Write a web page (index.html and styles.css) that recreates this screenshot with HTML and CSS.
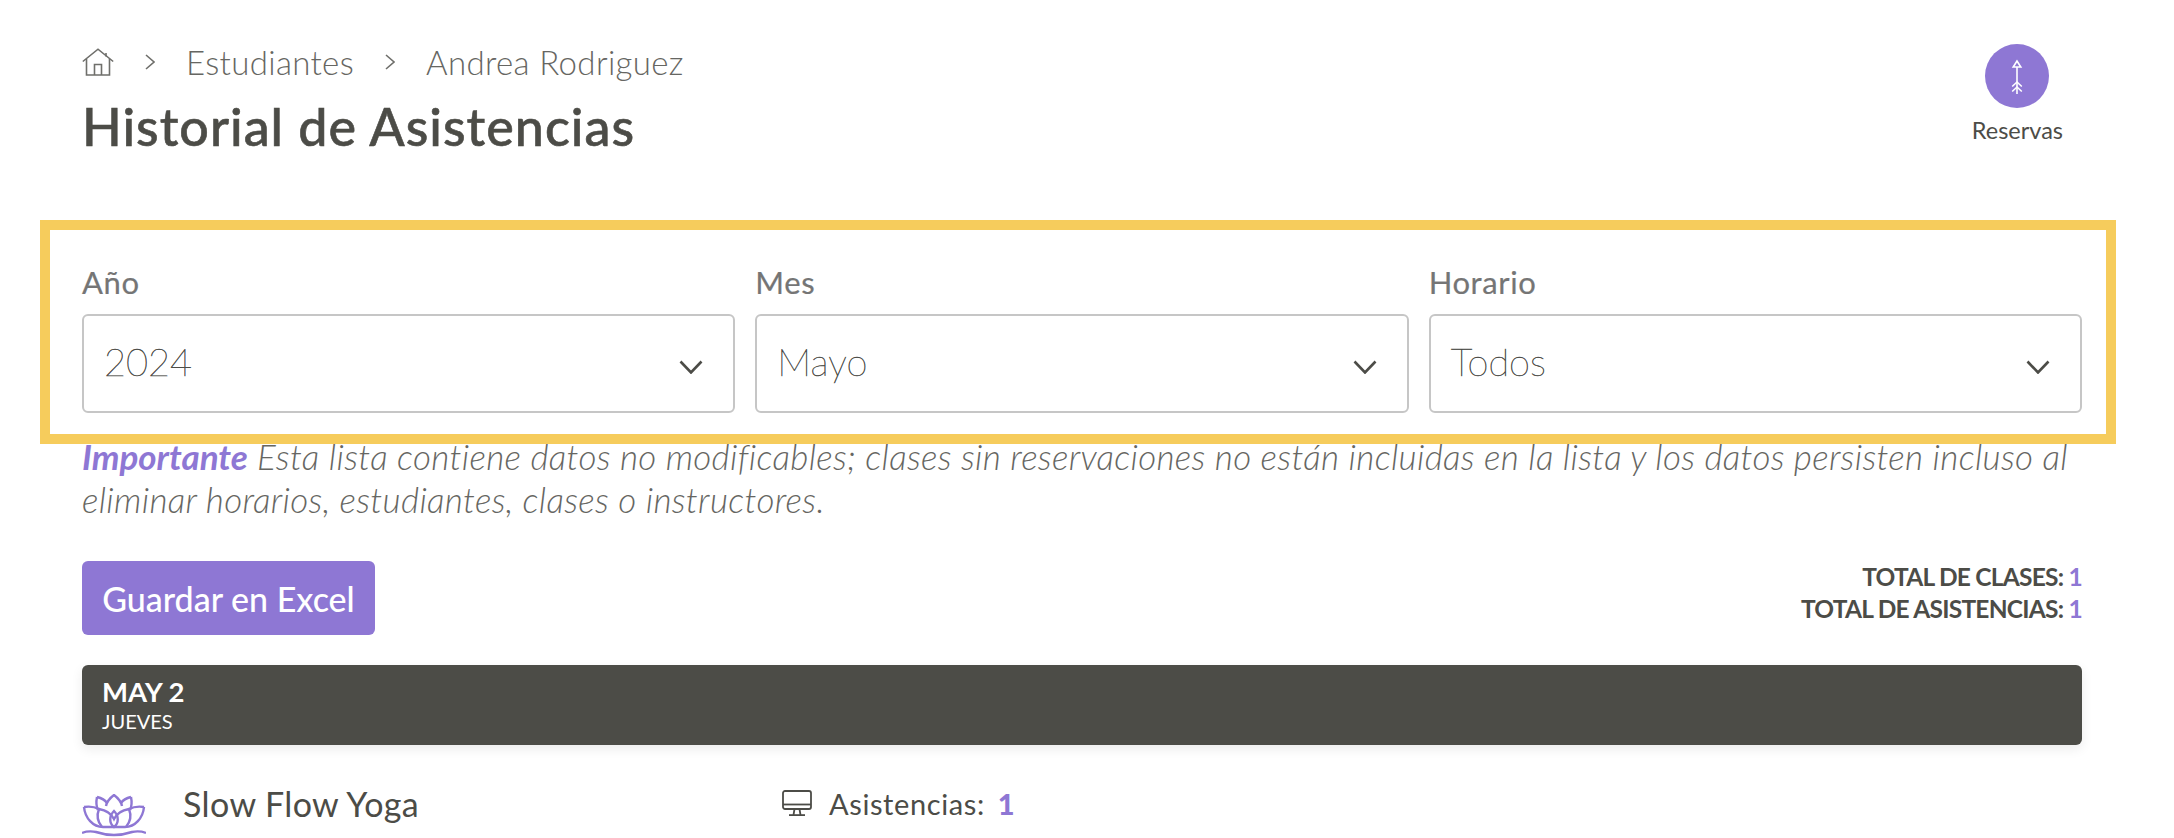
FILE: index.html
```html
<!DOCTYPE html>
<html lang="es">
<head>
  <meta charset="utf-8">
  <title>Historial de Asistencias</title>
  <link rel="stylesheet" href="styles.css">
</head>
<body>
  <div class="page">

    <div class="top">
      <div class="top-left">
        <nav class="crumbs">
          <svg class="home-icon" viewBox="0 0 32 28" fill="none" stroke="#6f6f6b" stroke-width="1.6">
            <path d="M0.8 13.5 16 1.2l15.2 12.3"/>
            <path d="M4.5 11v16h23V11"/>
            <path d="M12.5 27V16.5h7V27"/>
            <path d="M24 5v3.5"/>
          </svg>
          <svg class="crumb-sep" viewBox="0 0 10 16" fill="none" stroke="#6f6f6b" stroke-width="1.6"><path d="M1 1l8 7-8 7"/></svg>
          <span class="crumb">Estudiantes</span>
          <svg class="crumb-sep" viewBox="0 0 10 16" fill="none" stroke="#6f6f6b" stroke-width="1.6"><path d="M1 1l8 7-8 7"/></svg>
          <span class="crumb">Andrea Rodriguez</span>
        </nav>
        <h1 class="title">Historial de Asistencias</h1>
      </div>
      <div class="shortcut">
        <div class="shortcut-circle">
          <svg viewBox="0 0 64 64" fill="none" stroke="#fff" stroke-width="1.6">
            <path d="M32 17l-3.800 6h7.600z"/>
            <path d="M32 23v27"/>
            <path d="M27.200 42.500 32 38l4.800 4.500"/>
            <path d="M27.200 47.500 32 43l4.800 4.500"/>
          </svg>
        </div>
        <span class="shortcut-label">Reservas</span>
      </div>
    </div>

    <div class="filters">
      <div class="field">
        <label class="field-label">Año</label>
        <div class="select">
          <span>2024</span>
          <svg class="select-arrow" viewBox="0 0 24 14" fill="none" stroke="#4c4c47" stroke-width="2.6"><path d="M1.500 1.500 12 12.500 22.500 1.500"/></svg>
        </div>
      </div>
      <div class="field">
        <label class="field-label">Mes</label>
        <div class="select">
          <span>Mayo</span>
          <svg class="select-arrow" viewBox="0 0 24 14" fill="none" stroke="#4c4c47" stroke-width="2.6"><path d="M1.500 1.500 12 12.500 22.500 1.500"/></svg>
        </div>
      </div>
      <div class="field">
        <label class="field-label">Horario</label>
        <div class="select">
          <span>Todos</span>
          <svg class="select-arrow" viewBox="0 0 24 14" fill="none" stroke="#4c4c47" stroke-width="2.6"><path d="M1.500 1.500 12 12.500 22.500 1.500"/></svg>
        </div>
      </div>
    </div>

    <p class="note"><strong>Importante</strong> Esta lista contiene datos no modificables; clases sin reservaciones no están incluidas en la lista y los datos persisten incluso al eliminar horarios, estudiantes, clases o instructores.</p>

    <div class="actions">
      <button class="btn">Guardar en Excel</button>
      <div class="totals">
        <div>TOTAL DE CLASES: <span>1</span></div>
        <div>TOTAL DE ASISTENCIAS: <span>1</span></div>
      </div>
    </div>

    <div class="day-bar">
      <div class="day-date">MAY 2</div>
      <div class="day-name">JUEVES</div>
    </div>

    <div class="class-row">
      <div class="class-main">
        <svg class="lotus" viewBox="0 0 64 44" fill="none" stroke="#8e77d4" stroke-width="2.4">
          <path d="M2 13c6-1 11 0 15 2"/>
          <path d="M62 13c-6-1-11 0-15 2"/>
          <path d="M2 13c1 11 9 20 19 20h22c10 0 18-9 19-20"/>
          <path d="M15 3c-1 5-1 9 1 13M15 3c4 1 8 3 10 6"/>
          <path d="M49 3c1 5 1 9-1 13M49 3c-4 1-8 3-10 6"/>
          <path d="M24 12c1-5 4-8 8-11 4 3 7 6 8 11"/>
          <path d="M20 33c-5-6-5-13-3-18 6 1 12 4 15 10 3-6 9-9 15-10 2 5 2 12-3 18"/>
          <path d="M32 17c-5 5-5 12 0 16 5-4 5-11 0-16z"/>
          <path d="M0 39c5-2 9-2 14-1 6 2 12 3 18 3s12-1 18-3c5-1 9-1 14 1"/>
        </svg>
        <span class="class-name">Slow Flow Yoga</span>
      </div>
      <div class="class-count">
        <svg class="monitor" viewBox="0 0 30 26" fill="none" stroke="#4c4c47" stroke-width="1.800">
          <rect x="1" y="1" width="28" height="18" rx="2"/>
          <path d="M1 14.500h28"/>
          <path d="M12.500 19l-1 6M17.500 19l1 6"/>
          <path d="M7 25.100h16"/>
        </svg>
        <span class="count-label">Asistencias:</span>
        <span class="count-value">1</span>
      </div>
    </div>

  </div>
</body>
</html>
```

FILE: styles.css
```css
* { box-sizing: border-box; margin: 0; padding: 0; }
html, body { height: 100%; overflow: hidden; }
body {
  font-family: "Lato", "Open Sans", sans-serif;
  background-color: #fff;
  color: #4c4c47;
}
.page { padding: 44px 92px 0 82px; }

/* header */
.top { display: flex; justify-content: space-between; height: 176px; }
.crumbs { display: flex; align-items: center; height: 36px; }
.home-icon { width: 32px; height: 28px; margin-right: 31px; }
.crumb-sep { width: 10px; height: 16px; }
.crumb { font-size: 33px; font-weight: 300; letter-spacing: 0.35px; color: #666662; margin: 0 31px; }
.title { font-size: 52px; font-weight: 500; letter-spacing: 1px; line-height: 60px; margin-top: 16px; -webkit-text-stroke: 0.6px #4c4c47; }
.shortcut { display: flex; flex-direction: column; align-items: center; margin-right: 19px; }
.shortcut-circle { width: 64px; height: 64px; border-radius: 50%; background-color: #8e77d4; }
.shortcut-circle svg { display: block; width: 64px; height: 64px; }
.shortcut-label { font-size: 23.5px; line-height: 26px; margin-top: 9px; }

/* filters, yellow frame */
.filters {
  display: grid;
  grid-template-columns: repeat(3, 1fr);
  column-gap: 20px;
  height: 224px;
  margin: 0 -34px 0 -42px;
  padding: 34px 24px 0 32px;
  border: 10px solid #f6cc5c;
}
.field-label { display: block; font-size: 31px; font-weight: 400; letter-spacing: 0.6px; color: #757575; line-height: 36px; margin-bottom: 14px; -webkit-text-stroke: 0.2px #757575; }
.select {
  display: flex; align-items: center; justify-content: space-between;
  height: 99px;
  padding: 0 30px 5px 20px;
  border: 2px solid #c6c6c6;
  border-radius: 6px;
  font-size: 38px; font-weight: 200;
  -webkit-text-stroke: 0.5px #4c4c47;
}
.select-arrow { width: 24px; height: 14px; margin-top: 11px; }

.note {
  margin-top: -9px;
  font-size: 35px;
  font-style: italic;
  font-weight: 300;
  letter-spacing: 0.32px;
  line-height: 43px;
  color: #666662;
}
.note strong { font-weight: 700; letter-spacing: 0; color: #8e77d4; }

/* button + totals */
.actions { display: flex; justify-content: space-between; margin-top: 40px; height: 74px; }
.btn {
  width: 293px; height: 74px;
  background-color: #8e77d4;
  color: #fff;
  border: none;
  border-radius: 6px;
  font-family: inherit;
  font-size: 34px;
  font-weight: 500;
}
.totals { text-align: right; font-size: 24.500px; font-weight: 700; letter-spacing: -0.75px; line-height: 32px; }
.totals span { color: #8e77d4; }

/* day list */
.day-bar {
  height: 80px;
  margin-top: 30px;
  padding: 10px 20px;
  background-color: #4c4c47;
  border-radius: 6px;
  color: #fff;
  box-shadow: 0 4px 12px rgba(0,0,0,0.08);
}
.day-date { font-size: 27.500px; font-weight: 700; line-height: 34px; }
.day-name { font-size: 20px; line-height: 24px; }
.class-row { display: flex; margin-top: 46px; }
.class-main { display: flex; width: 700px; }
.lotus { width: 64px; height: 44px; margin: 3px 37px 0 0; flex-shrink: 0; }
.class-name { font-size: 34px; font-weight: 400; letter-spacing: 0.4px; line-height: 36px; margin-top: -5px; }
.class-count { display: flex; align-items: center; height: 30px; margin-top: -3px; }
.monitor { width: 30px; height: 26px; margin-right: 17px; }
.count-label { font-size: 29px; letter-spacing: 0.6px; }
.count-value { font-size: 29px; font-weight: 900; color: #8e77d4; margin-left: 13px; }
```
